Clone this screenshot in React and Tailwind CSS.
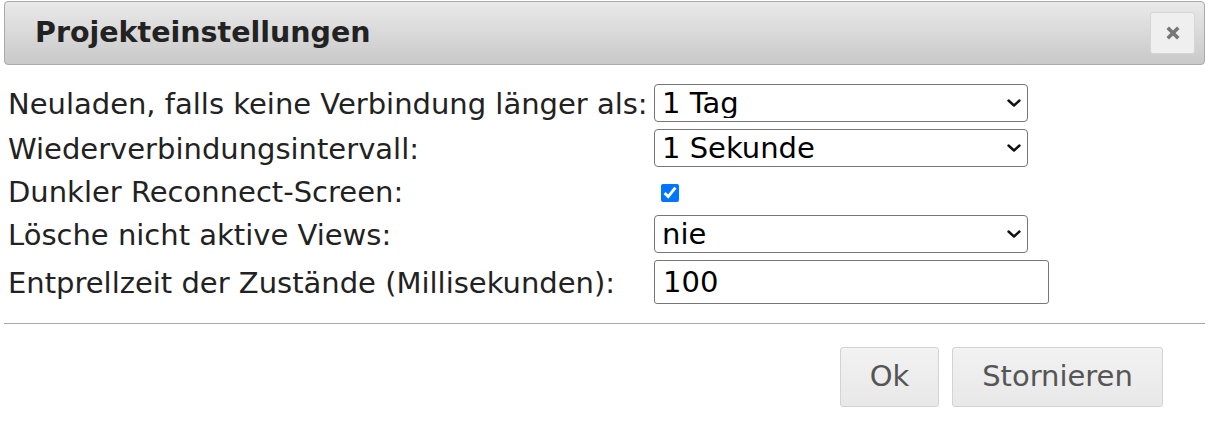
import { useState } from 'react'

const font = { fontFamily: '"DejaVu Sans", "Liberation Sans", sans-serif' }

function Chevron() {
  return (
    <svg
      className="pointer-events-none absolute right-[6px] top-1/2 -translate-y-1/2"
      width="16"
      height="10"
      viewBox="0 0 16 10"
      fill="none"
    >
      <path d="M2.5 2.5 L8 7.5 L13.5 2.5" stroke="#111" strokeWidth="2.4" strokeLinecap="round" strokeLinejoin="round" />
    </svg>
  )
}

function Select({ value, options }) {
  return (
    <div className="relative w-[374px]">
      <select
        defaultValue={value}
        className="appearance-none w-full h-[38px] rounded-[4px] border border-[#767676] bg-white pl-[7px] pr-8 text-[29px] leading-none text-black outline-none"
      >
        {options.map((o) => (
          <option key={o}>{o}</option>
        ))}
      </select>
      <Chevron />
    </div>
  )
}

function Row({ label, height, children }) {
  return (
    <div className="flex items-center" style={{ height }}>
      <div className="w-[646px] shrink-0 pt-[2px] text-[29px] leading-none text-[#222] whitespace-nowrap">{label}</div>
      {children}
    </div>
  )
}

export default function App() {
  const [dark, setDark] = useState(true)

  return (
    <div className="w-[1209px] h-[441px] bg-white pt-[1px] px-[4px]" style={font}>
      {/* title bar */}
      <div className="h-[64px] rounded-[4px] border border-[#aaaaaa] bg-gradient-to-b from-[#e9e9e9] to-[#c9c9c9] flex items-center justify-between pl-[30px] pr-[9px]">
        <h1 className="text-[28.5px] font-bold text-[#222] leading-none">Projekteinstellungen</h1>
        <button className="w-[45px] h-[42px] rounded-[3px] border border-[#d6d6d6] bg-[#efefef] flex items-center justify-center">
          <svg width="16" height="16" viewBox="0 0 16 16">
            <path d="M4 4 L12 12 M12 4 L4 12" stroke="#777" strokeWidth="3.6" strokeLinecap="square" />
          </svg>
        </button>
      </div>

      {/* form */}
      <div className="flex flex-col gap-[7px] pt-[19px] pl-[4px]">
        <Row label="Neuladen, falls keine Verbindung länger als:" height={38}>
          <Select value="1 Tag" options={['1 Stunde', '1 Tag', '1 Woche']} />
        </Row>
        <Row label="Wiederverbindungsintervall:" height={38}>
          <Select value="1 Sekunde" options={['1 Sekunde', '5 Sekunden', '10 Sekunden']} />
        </Row>
        <Row label="Dunkler Reconnect-Screen:" height={34}>
          <input
            type="checkbox"
            checked={dark}
            onChange={(e) => setDark(e.target.checked)}
            className="ml-[7px] mt-[4px] w-[18px] h-[18px] accent-[#0075ff]"
          />
        </Row>
        <Row label="Lösche nicht aktive Views:" height={38}>
          <Select value="nie" options={['nie', '1 Minute', '5 Minuten']} />
        </Row>
        <Row label="Entprellzeit der Zustände (Millisekunden):" height={44}>
          <input
            defaultValue="100"
            className="w-[395px] h-[44px] rounded-[3px] border border-[#767676] bg-white px-[8px] text-[29px] leading-none text-black outline-none"
          />
        </Row>
      </div>

      <div className="mt-[19px] border-t border-[#a9a9a9]" />

      {/* buttons */}
      <div className="flex justify-end gap-[13px] pt-[23px] pr-[42px]">
        <button className="h-[60px] w-[99px] rounded-[3px] border border-[#d3d3d3] bg-gradient-to-b from-[#f2f2f2] to-[#e8e8e8] text-[29px] text-[#555]">
          Ok
        </button>
        <button className="h-[60px] w-[211px] rounded-[3px] border border-[#d3d3d3] bg-gradient-to-b from-[#f2f2f2] to-[#e8e8e8] text-[29px] text-[#555]">
          Stornieren
        </button>
      </div>
    </div>
  )
}
